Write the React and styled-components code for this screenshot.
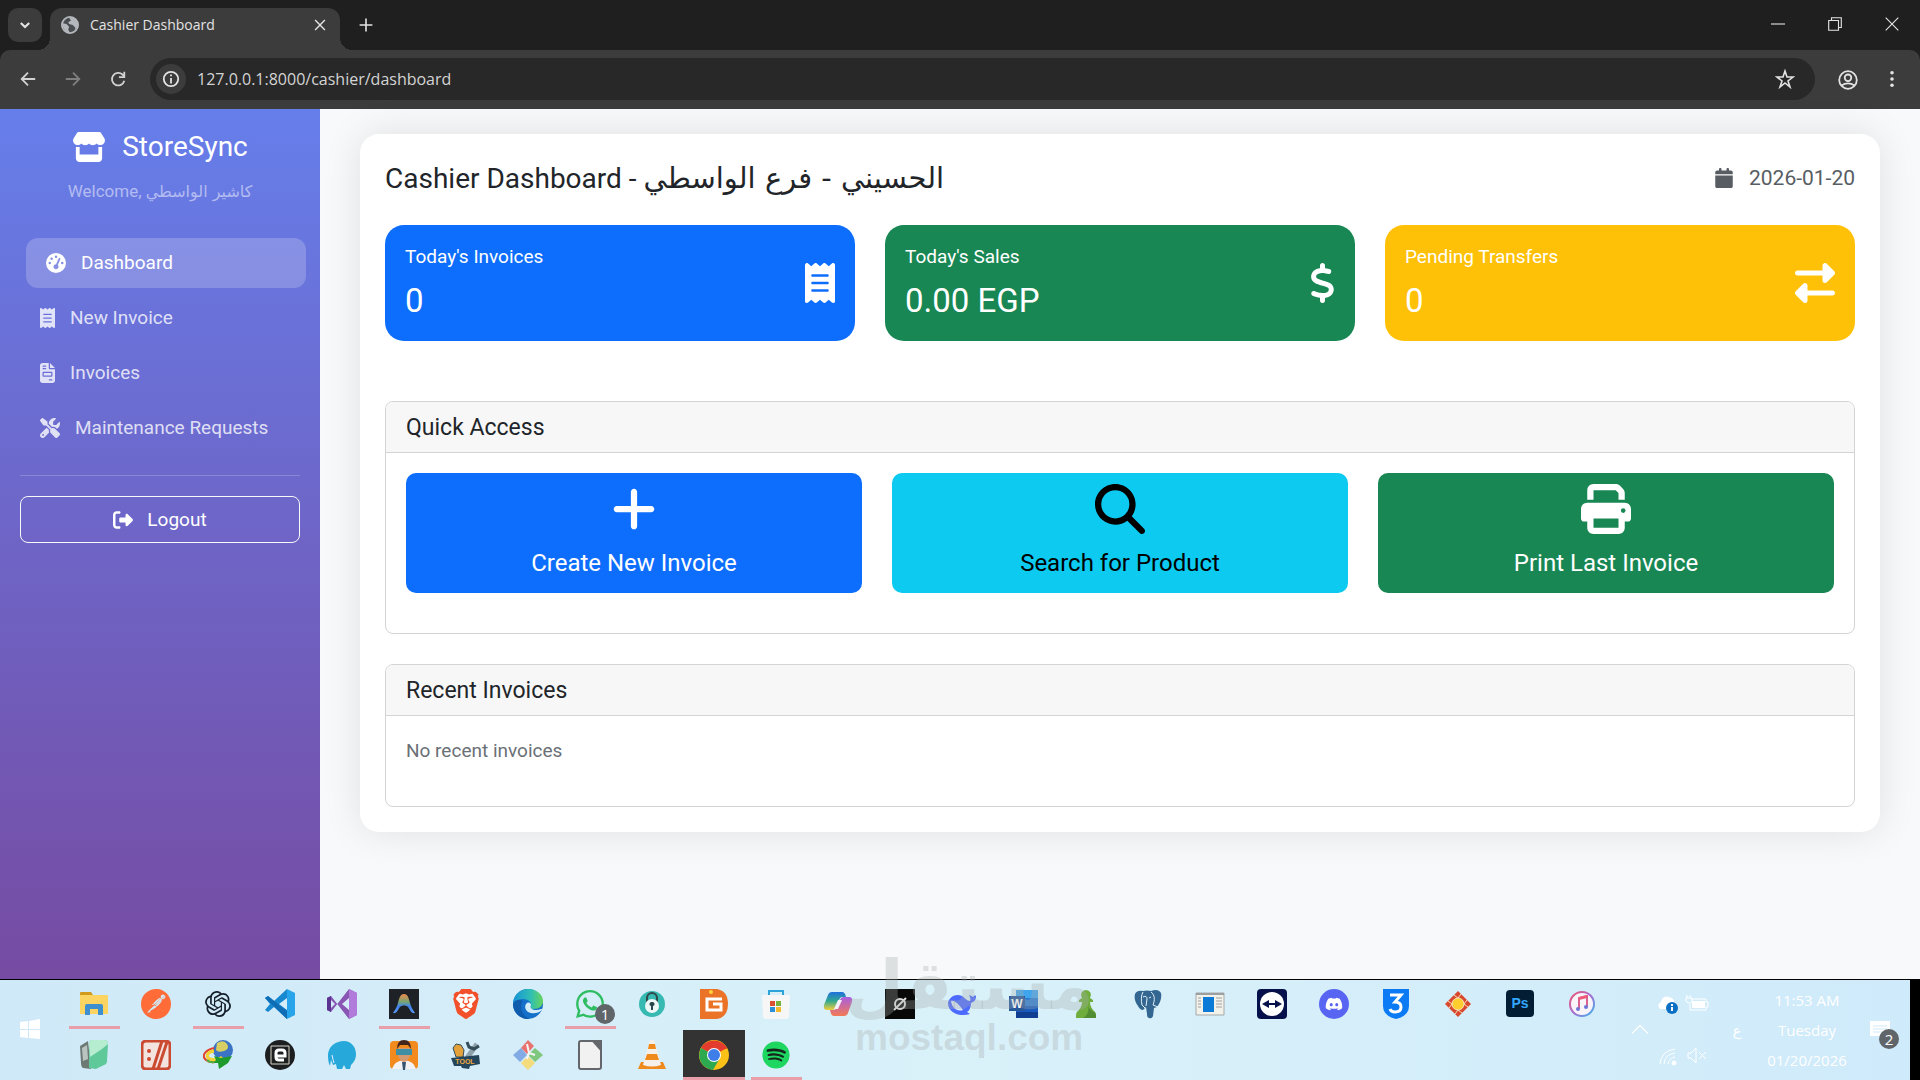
import React from 'react';
import styled, { createGlobalStyle } from 'styled-components';
import {
  FaStore,
  FaGaugeHigh,
  FaReceipt,
  FaFileInvoice,
  FaScrewdriverWrench,
  FaRightFromBracket,
  FaCalendar,
  FaDollarSign,
  FaRightLeft,
  FaPlus,
  FaMagnifyingGlass,
  FaPrint,
  FaWhatsapp,
  FaDiscord,
  FaSpotify,
} from 'react-icons/fa6';
import { SiPostman, SiOpenai, SiBrave } from 'react-icons/si';

const GlobalStyle = createGlobalStyle`
  * {
    box-sizing: border-box;
  }

  body {
    margin: 0;
    background: #f8f9fa;
    font-family: Roboto, 'DejaVu Sans', sans-serif;
  }

  button,
  input {
    font: inherit;
  }

  button {
    border: 0;
    padding: 0;
    background: none;
    color: inherit;
    cursor: pointer;
  }

  h1, h2, p {
    margin: 0;
    font-weight: 400;
  }

  svg {
    display: block;
    flex: none;
  }
`;

const Screen = styled.div`
  min-height: 100vh;
  display: flex;
  flex-direction: column;
`;

/* ---------- browser ---------- */

const BrowserChrome = styled.header`
  background: #1f1f1f;
  color: #e3e3e3;
  font-family: 'Open Sans', sans-serif;
`;

const TabStrip = styled.div`
  display: flex;
  align-items: center;
  height: 50px;
  padding-left: 8px;
`;

const TabSearch = styled.button`
  display: grid;
  place-items: center;
  width: 34px;
  height: 34px;
  border-radius: 10px;
  background: #3c3c3c;
`;

const Tab = styled.div`
  position: relative;
  display: flex;
  align-items: center;
  gap: 11px;
  align-self: flex-end;
  width: 290px;
  height: 42px;
  margin-left: 8px;
  padding: 0 10px 8px 11px;
  border-radius: 12px 12px 0 0;
  background: #3c3c3c;
  font-size: 14px;
  line-height: 20px;

  &::before,
  &::after {
    content: '';
    position: absolute;
    bottom: 0;
    width: 12px;
    height: 12px;
  }

  &::before {
    left: -12px;
    background: radial-gradient(circle at 0 0, transparent 12px, #3c3c3c 12px);
  }

  &::after {
    right: -12px;
    background: radial-gradient(circle at 100% 0, transparent 12px, #3c3c3c 12px);
  }
`;

const TabTitle = styled.span`
  flex: 1;
  white-space: nowrap;
`;

const SmallButton = styled.button`
  display: grid;
  place-items: center;
  width: 20px;
  height: 20px;
`;

const NewTab = styled(SmallButton)`
  margin-left: 16px;
`;

const WindowControls = styled.div`
  display: flex;
  align-self: stretch;
  margin-left: auto;
`;

const WindowButton = styled.button`
  display: grid;
  place-items: center;
  width: 57px;
  height: 48px;
`;

const Toolbar = styled.div`
  display: flex;
  align-items: center;
  height: 59px;
  padding: 0 18px 1px 13px;
  border-radius: 10px 10px 0 0;
  background: #3c3c3c;
`;

const ToolButton = styled.button`
  display: grid;
  place-items: center;
  width: 29px;
  height: 34px;
  margin-right: 16px;
  opacity: ${props => (props.$dim ? 0.4 : 0.9)};
`;

const AddressBar = styled.div`
  flex: 1;
  display: flex;
  align-items: center;
  height: 42px;
  margin-left: 2px;
  padding: 0 20px 0 6px;
  border-radius: 21px;
  background: #282828;
`;

const SiteInfo = styled.button`
  display: grid;
  place-items: center;
  width: 30px;
  height: 30px;
  border-radius: 50%;
  background: #3c3c3c;
`;

const AddressInput = styled.input`
  flex: 1;
  min-width: 0;
  margin-left: 11px;
  padding: 0;
  border: 0;
  outline: 0;
  background: none;
  color: #d4d4d4;
  font-size: 16px;
  line-height: 24px;
`;

const ToolbarEnd = styled.div`
  display: flex;
  align-items: center;
  gap: 25px;
  margin-left: 22px;
`;

/* ---------- page ---------- */

const Page = styled.div`
  flex: 1;
  display: flex;
`;

const Sidebar = styled.aside`
  width: 320px;
  padding: 19px 20px;
  background: linear-gradient(180deg, #667eea 0%, #764ba2 100%);
  color: #fff;
`;

const Glyph = styled.span`
  flex: none;

  svg {
    width: ${props => props.$width || props.$size}px;
    height: ${props => props.$size}px;
  }
`;

const Brand = styled.h2`
  display: flex;
  align-items: center;
  justify-content: center;
  gap: 16px;
  font-size: 28px;
  line-height: 38px;
`;

const Welcome = styled.p`
  margin: 13px 0 34px;
  text-align: center;
  color: rgba(255, 255, 255, 0.5);
  font-size: 17px;
  line-height: 24px;
  white-space: nowrap;
`;

const Arabic = styled.bdi`
  font-family: 'DejaVu Sans', sans-serif;
  font-size: ${props => props.$size}px;
`;

const Nav = styled.nav`
  display: flex;
  flex-direction: column;
  gap: 5px;
`;

const NavItem = styled.a`
  display: flex;
  align-items: center;
  gap: 15px;
  height: 50px;
  padding: 0 20px;
  margin: ${props => (props.$active ? '0 -6px 0 6px' : '0')};
  border-radius: 12px;
  background: ${props => (props.$active ? 'rgba(255, 255, 255, 0.2)' : 'none')};
  color: ${props => (props.$active ? '#fff' : 'rgba(255, 255, 255, 0.8)')};
  font-size: 19px;
  line-height: 30px;
  text-decoration: none;
  white-space: nowrap;
`;

const Divider = styled.hr`
  height: 1px;
  margin: 22px 0 20px;
  border: 0;
  background: rgba(255, 255, 255, 0.2);
`;

const Logout = styled.button`
  display: flex;
  align-items: center;
  justify-content: center;
  gap: 14px;
  width: 100%;
  height: 47px;
  border: 1px solid #f8f9fa;
  border-radius: 8px;
  font-size: 19px;
`;

const Main = styled.main`
  flex: 1;
  min-width: 0;
  padding: 25px 40px;
  background: #f8f9fa;
`;

const Board = styled.section`
  padding: 25px;
  border-radius: 19px;
  background: #fff;
  box-shadow: 0 0 38px rgba(0, 0, 0, 0.1);
`;

const BoardHead = styled.div`
  display: flex;
  align-items: center;
  justify-content: space-between;
  margin-bottom: 28px;
`;

const Title = styled.h1`
  height: 38px;
  color: #212529;
  font-size: 28px;
  line-height: 38px;
  white-space: nowrap;
`;

const Today = styled.span`
  display: flex;
  align-items: center;
  gap: 16px;
  color: #575d63;
  font-size: 21px;
`;

const StatGrid = styled.div`
  display: grid;
  grid-template-columns: repeat(3, 1fr);
  gap: 30px;
  margin-bottom: 60px;
`;

const Stat = styled.article`
  display: flex;
  align-items: center;
  justify-content: space-between;
  padding: 20px;
  border-radius: 19px;
  background: ${props => props.$color};
  color: #fff;
`;

const StatLabel = styled.p`
  margin-bottom: 12px;
  font-size: 19px;
  line-height: 24px;
`;

const StatValue = styled.p`
  font-size: 33px;
  line-height: 40px;
`;

const Panel = styled.section`
  border: 1px solid #d3d4d5;
  border-radius: 8px;

  & + & {
    margin-top: 30px;
  }
`;

const PanelTitle = styled.h2`
  padding: 11px 20px 9px;
  border-bottom: 1px solid #d3d4d5;
  border-radius: 7px 7px 0 0;
  background: #f7f7f7;
  color: #212529;
  font-size: 23px;
  line-height: 30px;
`;

const PanelBody = styled.div`
  padding: 20px 20px 40px;
`;

const ActionGrid = styled.div`
  display: grid;
  grid-template-columns: repeat(3, 1fr);
  gap: 30px;
`;

const Action = styled.button`
  display: flex;
  flex-direction: column;
  align-items: center;
  gap: 14px;
  height: 120px;
  padding-top: 11px;
  border-radius: 10px;
  background: ${props => props.$color};
  color: ${props => props.$ink || '#fff'};
  font-size: 24px;
  line-height: 30px;
`;

const Empty = styled.p`
  color: #6a7076;
  font-size: 19px;
  line-height: 30px;
`;

/* ---------- taskbar ---------- */

const Taskbar = styled.footer`
  position: relative;
  display: flex;
  height: 101px;
  border-top: 1px solid #000;
  background: linear-gradient(90deg, #d0e9f8 0%, #d9f1f9 50%, #cfeafa 100%);
  color: #fff;
  font-family: 'Open Sans', 'DejaVu Sans', sans-serif;
`;

const Start = styled.button`
  display: grid;
  place-items: center;
  width: 60px;
  height: 98px;
`;

const AppRows = styled.div`
  flex: 1;
  padding-left: 3px;
`;

const AppRow = styled.div`
  display: flex;
  height: 50px;
`;

const AppButton = styled.button`
  position: relative;
  display: grid;
  place-items: center;
  width: 62px;
  height: 50px;
  padding-bottom: ${props => (props.$low ? 0 : 3)}px;
  background: ${props => (props.$current ? '#333' : 'none')};

  &::after {
    content: '';
    position: absolute;
    left: ${props => (props.$current ? 0 : 6)}px;
    right: ${props => (props.$current ? 0 : 5)}px;
    bottom: ${props => (props.$low ? 0 : 1)}px;
    height: 3px;
    background: ${props => (props.$open ? '#e99faa' : 'none')};
  }
`;

const Count = styled.span`
  position: absolute;
  right: ${props => props.$right}px;
  bottom: ${props => props.$bottom}px;
  width: 20px;
  height: 20px;
  border-radius: 50%;
  background: #5f6569;
  color: #fff;
  font-size: 15px;
  line-height: 20px;
  text-align: center;
`;

const Tray = styled.div`
  display: flex;
  align-items: center;
`;

const TrayIcons = styled.div`
  display: grid;
  grid-template-columns: 24px 24px;
  gap: 28px 5px;
  margin: 0 16px 0 7px;
`;

const Language = styled.button`
  width: 24px;
  font-size: 15px;
`;

const Clock = styled.time`
  width: 92px;
  margin: 0 7px 0 12px;
  font-size: 15px;
  line-height: 30px;
  text-align: center;
`;

const Notices = styled.button`
  position: relative;
  display: grid;
  place-items: center;
  width: 40px;
  height: 40px;
`;

const ShowDesktop = styled.button`
  align-self: stretch;
  width: 10px;
  margin-left: 10px;
  background: #000;
`;

const Watermark = styled.div`
  position: absolute;
  left: 44%;
  bottom: 20px;
  display: flex;
  flex-direction: column;
  align-items: center;
  color: rgba(165, 170, 172, 0.32);
  font-weight: 700;
  pointer-events: none;
`;

const WatermarkArabic = styled.span`
  font-family: 'DejaVu Sans', sans-serif;
  font-size: 68px;
  line-height: 60px;
`;

const WatermarkLatin = styled.span`
  font-family: 'Liberation Sans', sans-serif;
  font-size: 37px;
  line-height: 44px;
`;

const Stroke = ({ size = 20, width = 2, children, color = 'currentColor' }) => (
  <svg width={size} height={size} viewBox="0 0 20 20" fill="none" stroke={color} strokeWidth={width}>
    {children}
  </svg>
);

const Globe = () => (
  <svg width="18" height="20" viewBox="0 0 20 20">
    <circle cx="10" cy="10" r="9" fill="#494c50" stroke="#b4b8bd" strokeWidth="2" />
    <path d="M2 8l4 1 3 3-1 3 2 4-5-2-3-5zM9 2l2 3-3 2 1 2 4 1 3 3-1 3 3-3 1-5-3-5-4-2z" fill="#b4b8bd" />
  </svg>
);

const Art = ({ children, size = 30 }) => (
  <svg width={size} height={size} viewBox="0 0 30 30">
    {children}
  </svg>
);

const Explorer = () => (
  <Art>
    <path d="M1 4q0-1 1-1h10l2 3H1z" fill="#d29a1c" />
    <path d="M1 6h27q1 0 1 1v17q0 1-1 1H1z" fill="#fcd462" />
    <path d="M6 26V17q0-2 2-2h14q2 0 2 2v9h-5v-6h-8v6z" fill="#3d8fd0" />
  </Art>
);

const Postman = () => <SiPostman size={30} color="#ff6c37" />;
const ChatGpt = () => <SiOpenai size={26} color="#16202b" />;

const Code = () => (
  <Art>
    <path d="M22 0l-13 12-6-5-3 2 5 6-5 6 3 2 6-5 13 12z" fill="#1787d0" />
    <path d="M0 9l3-2 19 15v8z" fill="#0f6db5" />
    <path d="M22 0l8 4v22l-8 4z" fill="#27a4ea" />
    <path d="M22 9v12l-8-6z" fill="#d5edf8" />
  </Art>
);

const VisualStudio = () => (
  <Art>
    <path d="M0 9l4-2 18 23 8-4V4l-8-4L4 23l-4-2z" fill="#8956b4" />
    <path d="M0 9v12l4 2V7z" fill="#5b3393" />
    <path d="M22 0l8 4v22l-8 4z" fill="#b17bdb" />
    <path d="M22 9v12l-7-6zM4 11v8l4-4z" fill="#d5edf8" />
  </Art>
);

const Antigravity = () => (
  <Art>
    <defs>
      <linearGradient id="arch" x1="0" y1="0" x2="0" y2="1">
        <stop offset="0" stopColor="#f08a4b" />
        <stop offset=".4" stopColor="#7aa56f" />
        <stop offset=".65" stopColor="#3f83ef" />
        <stop offset="1" stopColor="#5b9bf5" />
      </linearGradient>
    </defs>
    <path fill="#1e2226" d="M0 0h30v30H0z" />
    <path d="M15 5c4 0 5 5 6 9s3 7 5 10c-4 1-5-4-7-6s-6-2-8 0-3 7-7 6c2-3 4-6 5-10s2-9 6-9z" fill="url(#arch)" />
  </Art>
);

const BraveLion = () => (
  <Art>
    <path d="M9 1h12l3 3 3 1-1 4 1 3-4 12-8 6-8-6L3 12l1-3-1-4 3-1z" fill="#fff" />
    <SiBrave size={30} color="#f1502b" />
  </Art>
);

const Edge = () => (
  <Art>
    <defs>
      <linearGradient id="edge" x1="0" y1="0" x2="1" y2="0">
        <stop offset="0" stopColor="#1693d8" />
        <stop offset=".6" stopColor="#30bfb3" />
        <stop offset="1" stopColor="#68d45b" />
      </linearGradient>
    </defs>
    <circle cx="15" cy="15" r="15" fill="#1470c8" />
    <path d="M0 14C1 5 8 0 15 0c9 0 15 6 15 12 0 5-4 8-9 8-3 0-4-1-3-3 1-4-3-7-8-7-4 0-8 1-10 4z" fill="url(#edge)" />
    <path d="M10 12c-4 4-2 15 7 18-9 1-17-6-17-15 2-4 6-5 10-3z" fill="#0f5cae" />
    <path d="M14 14c-3 2-2 7 1 9 4 2 10 2 14-2 1-1 0-1-1-1-4 2-9 1-10-1-1-1 0-2 0-3 0-2-2-3-4-2z" fill="#d5edf8" />
  </Art>
);

const Vpn = () => (
  <Art>
    <circle cx="15" cy="15" r="13" fill="#35b9b1" />
    <path d="M10 13V9a5 5 0 0 1 10 0v4" fill="none" stroke="#30474b" strokeWidth="2" />
    <circle cx="15" cy="17" r="7" fill="#eef7f7" />
    <path d="M15 13a2 2 0 0 1 1 4v4h-2v-4a2 2 0 0 1 1-4z" fill="#27474d" />
  </Art>
);

const DiskGenius = () => (
  <Art>
    <path d="M1 0h17q11 2 11 15T18 30H1z" fill="#eb7328" />
    <path d="M23 10H8v11h14v-6h-8" fill="none" stroke="#fff" strokeWidth="3" />
    <circle cx="12" cy="3" r="2" fill="#ffd13b" />
  </Art>
);

const Store = () => (
  <Art>
    <path d="M8 8V2h14v6" fill="none" stroke="#2ba3d8" strokeWidth="2" />
    <path d="M1 6h28l-1 21q0 3-3 3H5q-3 0-3-3z" fill="#f6f6f6" />
    <path fill="#d8502f" d="M9 12h5v5H9z" />
    <path fill="#76b33d" d="M15 12h5v5h-5z" />
    <path fill="#2e8fd9" d="M9 18h5v5H9z" />
    <path fill="#f5b92b" d="M15 18h5v5h-5z" />
  </Art>
);

const Copilot = () => (
  <Art>
    <defs>
      <linearGradient id="copilotA" x1="0" y1="0" x2="0" y2="1">
        <stop offset="0" stopColor="#1e6fdd" />
        <stop offset=".5" stopColor="#31a98f" />
        <stop offset="1" stopColor="#f1cf3b" />
      </linearGradient>
      <linearGradient id="copilotB" x1="0" y1="0" x2="0" y2="1">
        <stop offset="0" stopColor="#a95fe0" />
        <stop offset="1" stopColor="#f37a56" />
      </linearGradient>
    </defs>
    <path d="M9 3h10q3 0 4 5h-4q-2 0-3 3l-3 7q-1 3-4 3H4q-4 0-3-5l4-10q1-3 4-3z" fill="url(#copilotA)" />
    <path d="M21 27H11q-3 0-4-6h4q2 0 3-3l3-7q1-3 4-3h5q4 0 3 5l-4 11q-1 3-4 3z" fill="url(#copilotB)" />
    <path d="M15 11h4l-4 9h-4z" fill="#f4f2fa" />
  </Art>
);

const Grok = () => (
  <Art>
    <path fill="#080808" d="M0 0h30v30H0z" />
    <circle cx="15" cy="15" r="5" fill="none" stroke="#ddd" strokeWidth="2" />
    <path d="M9 21L21 9" stroke="#ddd" strokeWidth="2" />
  </Art>
);

const DeepSeek = () => (
  <Art>
    <path d="M1 14C2 8 9 4 15 7c3 2 5 5 8 5 1-2 0-4-1-6 2 1 3 1 4 2 1-1 2-2 3-1 0 4-2 6-5 7 0 5-2 8-4 9l3 2c-8 3-22 0-22-11z" fill="#4d6bfe" />
    <path d="M4 12c4-1 8 4 12 9-6 2-11-2-12-9z" fill="#dbe9fb" />
  </Art>
);

const AppText = styled.text`
  font-family: 'Liberation Sans', sans-serif;
  font-weight: 700;
`;

const Word = () => (
  <Art>
    <path d="M7 1h22v28H7z" fill="#2b7cd3" />
    <path d="M7 1h22v8H7z" fill="#41a5ee" />
    <path d="M7 17h22v6H7z" fill="#185abd" />
    <path d="M7 23h22v6H7z" fill="#103f91" />
    <path d="M0 7h16v15H0z" fill="#27569b" />
    <AppText x="8" y="19" fontSize="12" textAnchor="middle" fill="#fff">W</AppText>
  </Art>
);

const Chess = () => (
  <Art>
    <path d="M15 1a5 5 0 0 1 4 8l3 2v2h-3c0 4 2 7 4 9 2 1 2 3 2 7H5c0-4 0-6 2-7 2-2 4-5 4-9H8v-2l3-2a5 5 0 0 1 4-8z" fill="#6fae3d" />
    <path d="M17 13c0 5 2 8 6 10 2 1 2 3 2 6H12c6-3 6-10 5-16z" fill="#538d33" />
  </Art>
);

const Postgres = () => (
  <Art>
    <path d="M2 5q2-4 8-3 4-1 8 0 7-3 10 2c1 5-1 10-4 14l-3 1-1 8q-1 3-4 2-2 0-2-4l-1-7-3 3q-3 0-5-4C2 13 1 9 2 5z" fill="#336791" />
    <path d="M10 3c-2 3-2 9-1 13l3 3M18 3c4 3 4 8 2 13l5 2M10 8q4-2 4 2l-1 7M16 9l2-1" fill="none" stroke="#e4f1f8" strokeWidth="1" />
  </Art>
);

const RunWindow = () => (
  <Art>
    <path d="M1 4h28v22H1z" fill="#f2f1ea" stroke="#a5a9aa" />
    <path fill="#9b9f9f" d="M1 4h28v2H1z" />
    <path fill="#0c7bd7" d="M8 8h11v15H8z" />
    <path d="M3 9h3M3 12h3M3 15h3M3 18h3M21 9h6M21 12h6M21 15h6M21 18h6" stroke="#a0a0a0" />
  </Art>
);

const TeamViewer = () => (
  <Art>
    <rect width="30" height="30" rx="4" fill="#06104a" />
    <circle cx="15" cy="15" r="12" fill="#fff" />
    <path d="M5 15l7-4v3h6v-3l7 4-7 4v-3h-6v3z" fill="#06104a" />
  </Art>
);

const Discord = () => (
  <Art>
    <circle cx="15" cy="15" r="15" fill="#5865f2" />
    <FaDiscord x="6" y="6" size={18} color="#fff" />
  </Art>
);

const Css3 = () => (
  <Art>
    <path d="M2 0h26v17q0 10-13 13Q2 27 2 17z" fill="#0b7bf5" />
    <path d="M9 6h11l-6 7q6 0 6 5t-6 5q-4 0-5-3" fill="none" stroke="#fff" strokeWidth="3" />
  </Art>
);

const Diamond = () => (
  <Art>
    <path d="M15 2l13 13-13 13L2 15z" fill="#d9482c" />
    <circle cx="15" cy="15" r="6" fill="#ffce2e" stroke="#f6e3bd" />
    <path d="M11 6l4 3 3-4M24 11l-3 4 4 3M19 24l-4-3-3 4M6 19l3-4-4-3" stroke="#f6e3bd" fill="none" />
  </Art>
);

const Photoshop = () => (
  <Art>
    <rect x="1" y="1" width="28" height="27" rx="4" fill="#031d34" />
    <AppText x="15" y="19" fontSize="14" textAnchor="middle" fill="#31a8ff">Ps</AppText>
  </Art>
);

const Music = () => (
  <Art>
    <defs>
      <linearGradient id="music" x1="0" y1="0" x2="1" y2="1">
        <stop offset="0" stopColor="#f2566e" />
        <stop offset=".5" stopColor="#a66bd0" />
        <stop offset="1" stopColor="#41b8ee" />
      </linearGradient>
    </defs>
    <circle cx="15" cy="15" r="12" fill="#f8f4fa" stroke="url(#music)" strokeWidth="2" />
    <path d="M12 20V9l8-2v11" fill="none" stroke="#d9618f" strokeWidth="2" />
    <path d="M12 8l8-2v3l-8 2z" fill="#ee5b78" />
    <circle cx="11" cy="20" r="2" fill="#6f75d8" />
    <circle cx="19" cy="18" r="2" fill="#6f75d8" />
  </Art>
);

const GlassPages = () => (
  <Art>
    <path d="M1 6l8-5 3 28-8-1q-2-1-2-5z" fill="#6d7975" />
    <path d="M3 8l5-3 1 14-5 2z" fill="#b9c4c1" />
    <path d="M10 4q0-4 4-4h11q4 0 4 4l-1 17q0 3-3 4l-8 4-7-1z" fill="#5fc99a" />
    <path d="M10 4q0-4 4-4h11q4 0 4 4l-6 5-12 8z" fill="#b6ecd0" />
  </Art>
);

const CodeBox = () => (
  <Art>
    <rect x="1" y="1" width="28" height="28" rx="4" fill="#f3e4df" stroke="#cb4a32" strokeWidth="3" />
    <path d="M21 1l-9 28M26 2l-9 27" stroke="#cb4a32" strokeWidth="3" />
    <circle cx="8" cy="11" r="2" fill="#cb4a32" />
    <circle cx="8" cy="19" r="2" fill="#cb4a32" />
  </Art>
);

const Idm = () => (
  <Art>
    <circle cx="20" cy="10" r="10" fill="#3b74c4" />
    <path d="M14 3q7-4 10 1t-3 7-8-1z" fill="#d7cf63" />
    <path d="M11 8C2 10-2 16 3 20s13 2 16-2" fill="none" stroke="#e0442c" strokeWidth="2" />
    <path d="M11 11c-7 1-9 6-4 8s10 0 12-2" fill="none" stroke="#f5d12e" strokeWidth="3" />
    <path d="M4 20c4 4 11 2 14-1" fill="none" stroke="#4fae3e" strokeWidth="2" />
    <path d="M11 16l7 2 11-2-4 7-9 6-1-6-4 0 2-3z" fill="#1f9a2c" />
  </Art>
);

const Epic = () => (
  <Art>
    <circle cx="15" cy="15" r="15" fill="#1c1e1f" />
    <path d="M6 6h18v18H6z" fill="none" stroke="#d8d4cb" />
    <path d="M19 20h-5q-3 0-3-3v-4q0-3 3-3h3q3 0 3 3v3h-8" fill="none" stroke="#fff" strokeWidth="3" />
  </Art>
);

const Elephant = () => (
  <Art>
    <path d="M1 14C2 6 9 1 17 1c7 0 12 6 12 13 0 6-3 9-5 11l-1 4h-4l-2-4-2 4h-5l-1-5-3 1-2-5-1 6H3c-2-4-2-8-2-12z" fill="#26a8da" />
    <path d="M5 15q1 5 2 8" fill="none" stroke="#eef" strokeWidth="1" />
  </Art>
);

const Doctor = () => (
  <Art>
    <rect x="1" y="1" width="28" height="28" rx="4" fill="#f28a1e" />
    <path d="M3 29q2-8 12-9 10 1 12 9z" fill="#f2f2f4" />
    <path d="M9 8h12v7q-2 7-6 7t-6-7z" fill="#d59a72" />
    <path d="M8 9Q8 0 15 0t7 9l-3-4H11z" fill="#43251d" />
    <path d="M7 9h16v6H7z" fill="#3f8fa5" />
    <path d="M13 22h4l-1 8h-2z" fill="#36536d" />
  </Art>
);

const RepairTool = () => (
  <Art>
    <path d="M16 18L26 4" stroke="#8fa1a8" strokeWidth="5" />
    <path d="M16 2l2 5 5 2 5-3M12 18L6 8" stroke="#344d59" strokeWidth="3" fill="none" />
    <path d="M2 8l3-4 5 1 3 5-1 7H5z" fill="#e4a13a" stroke="#344d59" />
    <path d="M0 18l28-3 1 9-10 2-1 3-7-1-1-2H3z" fill="#24465c" />
    <AppText x="14" y="24" fontSize="7" textAnchor="middle" fill="#f0a83a">TOOL</AppText>
  </Art>
);

const GitTiles = () => (
  <Art>
    <path d="M15 0l6 6-7 8-6-6z" fill="#e97371" />
    <path d="M22 8l8 7-8 7-7-7z" fill="#7fc77f" />
    <path d="M8 8l6 7-7 7-7-7z" fill="#82abe6" />
    <path d="M15 16l7 7-7 7-7-7z" fill="#f4dc7d" />
    <path d="M14 4l2 9 6 2M16 13l-2 6" stroke="#f5f5f5" strokeWidth="2" fill="none" />
  </Art>
);

const LibreOffice = () => (
  <Art>
    <path d="M6 1h12l8 9v17q0 2-2 2H6q-2 0-2-2V3q0-2 2-2z" fill="#f1f1f1" stroke="#63676b" strokeWidth="2" />
    <path d="M17 0h10v11z" fill="#63676b" />
  </Art>
);

const Vlc = () => (
  <Art>
    <path d="M4 22h22l3 7H1z" fill="#ef8a1d" />
    <path d="M13 0h4l7 25q-9 3-18 0z" fill="#f5f1ea" />
    <path d="M12 4h6l1 5h-8zM10 14h10l2 6H8z" fill="#ef8a1d" />
  </Art>
);

const Chrome = () => (
  <Art>
    <circle cx="15" cy="15" r="15" fill="#fbc116" />
    <path d="M15 15L2 8A15 15 0 0 1 28 8z" fill="#e33b2e" />
    <path d="M2 8a15 15 0 0 0 12 22l7-12-6-3z" fill="#2da94f" />
    <path d="M15 8h13" stroke="#e33b2e" strokeWidth="1" />
    <circle cx="15" cy="15" r="7" fill="#fff" />
    <circle cx="15" cy="15" r="6" fill="#3f7de8" />
  </Art>
);

const Whatsapp = () => <FaWhatsapp size={32} color="#2fbd62" />;

const Spotify = () => (
  <Art size={28}>
    <circle cx="15" cy="15" r="14" fill="#17261c" />
    <FaSpotify size={30} color="#1ed760" />
  </Art>
);

const navItems = [
  { label: 'Dashboard', icon: FaGaugeHigh, active: true },
  { label: 'New Invoice', icon: FaReceipt, width: 15 },
  { label: 'Invoices', icon: FaFileInvoice, width: 15 },
  { label: 'Maintenance Requests', icon: FaScrewdriverWrench },
];

const stats = [
  { label: "Today's Invoices", value: '0', color: '#0d6efd', icon: FaReceipt, width: 30 },
  { label: "Today's Sales", value: '0.00 EGP', color: '#198754', icon: FaDollarSign, width: 25 },
  { label: 'Pending Transfers', value: '0', color: '#ffc107', icon: FaRightLeft },
];

const actions = [
  { label: 'Create New Invoice', color: '#0d6efd', icon: FaPlus },
  { label: 'Search for Product', color: '#0dcaf0', ink: '#000', icon: FaMagnifyingGlass },
  { label: 'Print Last Invoice', color: '#198754', icon: FaPrint },
];

const topApps = [
  { name: 'File Explorer', icon: Explorer, open: true },
  { name: 'Postman', icon: Postman },
  { name: 'ChatGPT', icon: ChatGpt, open: true },
  { name: 'Visual Studio Code', icon: Code },
  { name: 'Visual Studio', icon: VisualStudio },
  { name: 'Antigravity', icon: Antigravity, open: true },
  { name: 'Brave', icon: BraveLion },
  { name: 'Edge', icon: Edge },
  { name: 'WhatsApp', icon: Whatsapp, open: true, count: 1 },
  { name: 'VPN', icon: Vpn },
  { name: 'DiskGenius', icon: DiskGenius },
  { name: 'Store', icon: Store },
  { name: 'Copilot', icon: Copilot },
  { name: 'Grok', icon: Grok },
  { name: 'DeepSeek', icon: DeepSeek },
  { name: 'Word', icon: Word },
  { name: 'Chess', icon: Chess },
  { name: 'PostgreSQL', icon: Postgres },
  { name: 'Run', icon: RunWindow },
  { name: 'TeamViewer', icon: TeamViewer },
  { name: 'Discord', icon: Discord },
  { name: 'CSS', icon: Css3 },
  { name: 'Diamond', icon: Diamond },
  { name: 'Photoshop', icon: Photoshop },
  { name: 'Music', icon: Music },
];

const bottomApps = [
  { name: 'Pages', icon: GlassPages },
  { name: 'Code Box', icon: CodeBox },
  { name: 'Download Manager', icon: Idm },
  { name: 'Epic', icon: Epic },
  { name: 'Elephant', icon: Elephant },
  { name: 'Doctor', icon: Doctor },
  { name: 'Repair Tool', icon: RepairTool },
  { name: 'Git', icon: GitTiles },
  { name: 'LibreOffice', icon: LibreOffice },
  { name: 'VLC', icon: Vlc },
  { name: 'Chrome', icon: Chrome, open: true, current: true },
  { name: 'Spotify', icon: Spotify, open: true },
];

const Browser = () => (
  <BrowserChrome>
    <TabStrip>
      <TabSearch aria-label="Search tabs">
        <Stroke size={14} width={3}><path d="M4 7l6 6 6-6" /></Stroke>
      </TabSearch>
      <Tab>
        <Globe />
        <TabTitle>Cashier Dashboard</TabTitle>
        <SmallButton aria-label="Close tab">
          <Stroke size={14}><path d="M3 3l14 14M17 3L3 17" /></Stroke>
        </SmallButton>
      </Tab>
      <NewTab aria-label="New tab">
        <Stroke size={16}><path d="M10 2v16M2 10h16" /></Stroke>
      </NewTab>
      <WindowControls>
        <WindowButton aria-label="Minimize">
          <Stroke size={14} width={1.6}><path d="M0 10h20" /></Stroke>
        </WindowButton>
        <WindowButton aria-label="Restore">
          <Stroke size={14} width={1.6}><path d="M1 5h14v14H1zM5 5V1h14v14h-4" /></Stroke>
        </WindowButton>
        <WindowButton aria-label="Close">
          <Stroke size={14} width={1.6}><path d="M1 1l18 18M19 1L1 19" /></Stroke>
        </WindowButton>
      </WindowControls>
    </TabStrip>
    <Toolbar>
      <ToolButton aria-label="Back">
        <Stroke size={18}><path d="M18 10H3M10 3l-7 7 7 7" /></Stroke>
      </ToolButton>
      <ToolButton aria-label="Forward" $dim>
        <Stroke size={18}><path d="M2 10h15M10 3l7 7-7 7" /></Stroke>
      </ToolButton>
      <ToolButton aria-label="Reload">
        <Stroke size={18}><path d="M17 12a7 7 0 1 1-2-7l2 2M17 2v6h-6" /></Stroke>
      </ToolButton>
      <AddressBar>
        <SiteInfo aria-label="Site information">
          <Stroke size={18}><circle cx="10" cy="10" r="8" /><path d="M10 9v6M10 5v2" /></Stroke>
        </SiteInfo>
        <AddressInput aria-label="Address" defaultValue="127.0.0.1:8000/cashier/dashboard" />
        <SmallButton aria-label="Bookmark">
          <Stroke width={1.6}><path d="M10 2l2 6h6l-5 4 2 6-5-4-5 4 2-6-5-4h6z" /></Stroke>
        </SmallButton>
      </AddressBar>
      <ToolbarEnd>
        <SmallButton aria-label="Profile">
          <Stroke size={22} width={1.6}>
            <circle cx="10" cy="10" r="8" />
            <circle cx="10" cy="8" r="3" />
            <path d="M4 15q6-4 12 0" />
          </Stroke>
        </SmallButton>
        <SmallButton aria-label="Menu">
          <svg width="18" height="18" viewBox="0 0 20 20" fill="currentColor">
            <circle cx="10" cy="3" r="2" />
            <circle cx="10" cy="10" r="2" />
            <circle cx="10" cy="17" r="2" />
          </svg>
        </SmallButton>
      </ToolbarEnd>
    </Toolbar>
  </BrowserChrome>
);

const Apps = ({ items, low }) => (
  <AppRow>
    {items.map(({ name, icon: Icon, open, current, count }) => (
      <AppButton key={name} aria-label={name} $open={open} $current={current} $low={low}>
        <Icon />
        {count && <Count $right={6} $bottom={6}>{count}</Count>}
      </AppButton>
    ))}
  </AppRow>
);

const SystemTray = () => (
  <Tray>
    <Stroke size={18} width={1.4} color="#fff"><path d="M1 14l9-9 9 9" /></Stroke>
    <TrayIcons>
      <svg width="24" height="24" viewBox="0 0 24 24">
        <path d="M4 17q-4-4 1-7 2-7 8-5 5 1 5 5 5 2 3 7z" fill="#fff" />
        <circle cx="16" cy="16" r="6" fill="#0b70c4" />
        <path d="M16 15v4M16 12v2" stroke="#fff" strokeWidth="2" />
      </svg>
      <svg width="24" height="24" viewBox="0 0 24 24" fill="#fff">
        <path d="M7 9h13v7H7z" />
        <path d="M6 7h15v3h2v5h-2v3H5v-6M2 3v3M5 3v3M1 6h6v3l-2 2H3L1 9z" fill="none" stroke="#fff" />
      </svg>
      <svg width="24" height="24" viewBox="0 0 24 24" fill="none" stroke="#fff">
        <path d="M4 20Q5 7 19 5M8 20Q9 10 19 9M12 20q1-6 7-7" />
        <circle cx="18" cy="19" r="2" fill="#fff" />
      </svg>
      <svg width="24" height="24" viewBox="0 0 24 24" fill="none" stroke="#fff">
        <path d="M3 9h3l5-5v15l-5-5H3zM14 8l7 7M21 8l-7 7" />
      </svg>
    </TrayIcons>
    <Language aria-label="Keyboard language">ع</Language>
    <Clock dateTime="2026-01-20T11:53">
      11:53 AM
      <br />
      Tuesday
      <br />
      01/20/2026
    </Clock>
    <Notices aria-label="Notifications">
      <svg width="22" height="22" viewBox="0 0 22 22">
        <path d="M1 2h20v15h-6l-4 4v-4H1z" fill="#fff" />
        <path d="M4 7h14M4 10h14M4 13h9" stroke="#d0e9f8" />
      </svg>
      <Count $right={1} $bottom={1}>2</Count>
    </Notices>
    <ShowDesktop aria-label="Show desktop" />
  </Tray>
);

const App = () => (
  <Screen>
    <GlobalStyle />
    <Browser />
    <Page>
      <Sidebar>
        <Brand>
          <Glyph $size={30} $width={34}><FaStore /></Glyph>
          StoreSync
        </Brand>
        <Welcome>
          Welcome, <Arabic $size={16}>كاشير الواسطي</Arabic>
        </Welcome>
        <Nav>
          {navItems.map(({ label, icon: Icon, active, width }) => (
            <NavItem key={label} href="#" $active={active}>
              <Glyph $size={20} $width={width}><Icon /></Glyph>
              {label}
            </NavItem>
          ))}
        </Nav>
        <Divider />
        <Logout>
          <Glyph $size={20}><FaRightFromBracket /></Glyph>
          Logout
        </Logout>
      </Sidebar>
      <Main>
        <Board>
          <BoardHead>
            <Title>
              Cashier Dashboard - <Arabic $size={29}>الحسيني - فرع الواسطي</Arabic>
            </Title>
            <Today>
              <Glyph $size={20} $width={18}><FaCalendar /></Glyph>
              2026-01-20
            </Today>
          </BoardHead>
          <StatGrid>
            {stats.map(({ label, value, color, icon: Icon, width }) => (
              <Stat key={label} $color={color}>
                <div>
                  <StatLabel>{label}</StatLabel>
                  <StatValue>{value}</StatValue>
                </div>
                <Glyph $size={40} $width={width}><Icon /></Glyph>
              </Stat>
            ))}
          </StatGrid>
          <Panel>
            <PanelTitle>Quick Access</PanelTitle>
            <PanelBody>
              <ActionGrid>
                {actions.map(({ label, color, ink, icon: Icon }) => (
                  <Action key={label} $color={color} $ink={ink}>
                    <Glyph $size={50}><Icon /></Glyph>
                    {label}
                  </Action>
                ))}
              </ActionGrid>
            </PanelBody>
          </Panel>
          <Panel>
            <PanelTitle>Recent Invoices</PanelTitle>
            <PanelBody>
              <Empty>No recent invoices</Empty>
            </PanelBody>
          </Panel>
        </Board>
      </Main>
    </Page>
    <Taskbar>
      <Start aria-label="Start">
        <svg width="20" height="20" viewBox="0 0 20 20" fill="#fff">
          <path d="M0 3l8-1v8H0zM9 2l11-2v10H9zM0 11h8v8l-8-1zM9 11h11v9L9 19z" />
        </svg>
      </Start>
      <AppRows>
        <Apps items={topApps} />
        <Apps items={bottomApps} low />
      </AppRows>
      <SystemTray />
      <Watermark>
        <WatermarkArabic>مستقل</WatermarkArabic>
        <WatermarkLatin>mostaql.com</WatermarkLatin>
      </Watermark>
    </Taskbar>
  </Screen>
);

export default App;
